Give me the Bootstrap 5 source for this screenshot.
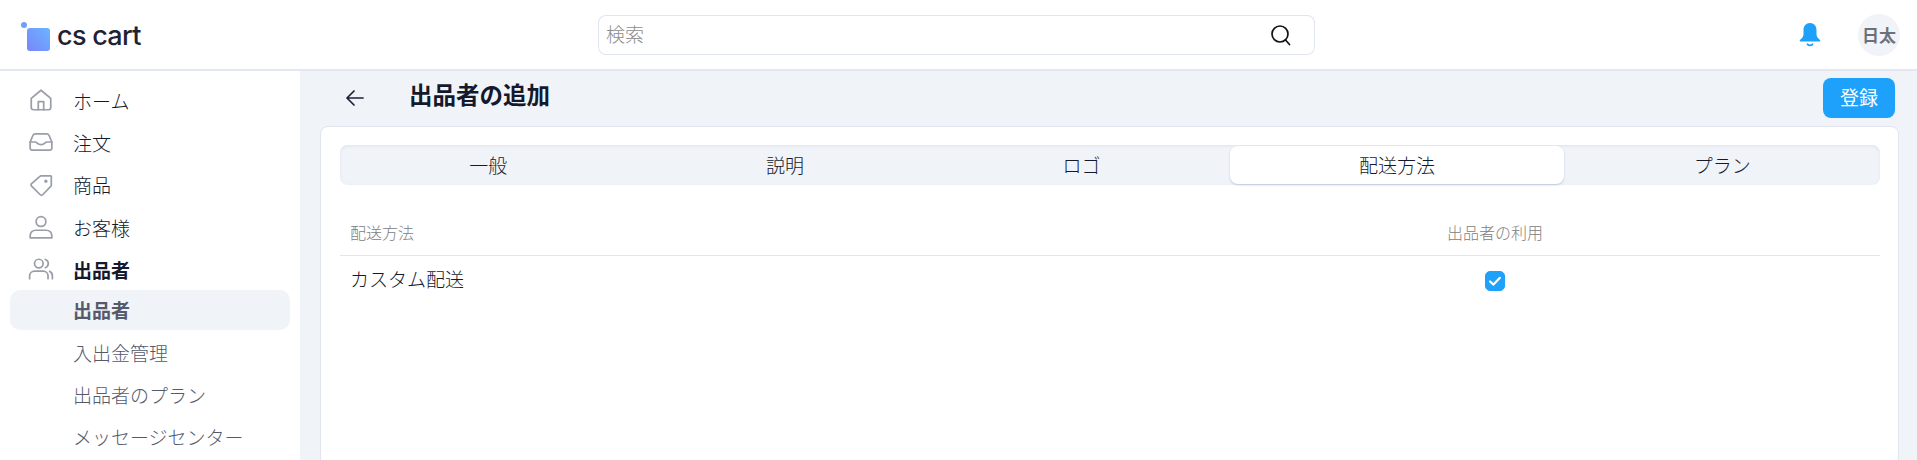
<!DOCTYPE html>
<html lang="ja">
<head>
    <meta charset="UTF-8">
    <meta name="viewport" content="width=device-width, initial-scale=1.0">
    <title>出品者の追加</title>
    <link href="https://cdn.jsdelivr.net/npm/bootstrap@5.3.3/dist/css/bootstrap.min.css" rel="stylesheet">
    <style>
        html, body {
            height: 100%;
            overflow: hidden;
        }
        body {
            font-family: "Noto Sans CJK JP", "Liberation Sans", sans-serif;
            font-size: 19px;
            font-weight: 300;
            color: #14192b;
            background: #f0f3f8;
        }
        .top-bar {
            height: 71px;
            flex: none;
            background: #fff;
            border-bottom: 2px solid #e3e7f1;
        }
        .logo-box {
            width: 598px;
            padding: 4px 0 0 21px;
        }
        .logo-name {
            font-family: Inter, "Liberation Sans", sans-serif;
            font-size: 27px;
            font-weight: 500;
            letter-spacing: -0.7px;
            color: #1d2234;
            margin-left: 6px;
        }
        .search-box {
            width: 717px;
            height: 40px;
        }
        .search-box .form-control {
            border: 1px solid #e0e5f0;
            border-right: 0;
            border-radius: 8px 0 0 8px;
            padding: 0 7px;
            font-size: 19px;
            font-weight: 300;
            box-shadow: none;
        }
        .search-box .form-control::placeholder {
            color: #8c8c8c;
        }
        .search-box .input-group-text {
            background: #fff;
            border: 1px solid #e0e5f0;
            border-left: 0;
            border-radius: 0 8px 8px 0;
            padding: 0 22px 0 0;
        }
        .user-chip {
            width: 42px;
            height: 42px;
            background: #f0f3f8;
            color: #6c7078;
            font-size: 17px;
            font-weight: 700;
            margin: 0 17px 0 36px;
        }
        .page-body {
            flex: 1 1 0;
            min-height: 0;
            overflow: hidden;
        }
        .side-col {
            width: 300px;
            flex: none;
            background: #fff;
            padding: 10px 10px 0;
        }
        .side-link {
            height: 40px;
            margin-bottom: 2.3px;
            padding-left: 63px;
            position: relative;
            color: #14192b;
            text-decoration: none;
            border-radius: 10px;
        }
        .side-link svg {
            position: absolute;
            left: 18px;
            top: 6px;
            width: 26px;
            height: 26px;
            fill: none;
            stroke: #9a9ea9;
            stroke-width: 1.6;
            stroke-linecap: round;
            stroke-linejoin: round;
        }
        .side-sub {
            margin-top: -2px;
        }
        .side-sub .side-link {
            color: #555a6b;
        }
        .side-sub .side-link.is-on {
            background: #f0f3f8;
            color: #555a6b;
            font-weight: 700;
        }
        .main-col {
            padding: 0 18px 0 20px;
        }
        .title-row {
            height: 55px;
            padding-bottom: 2px;
        }
        .back-link {
            width: 89px;
            padding-left: 25px;
        }
        .page-title {
            font-size: 23.5px;
            font-weight: 700;
            margin: 0 0 6px;
            line-height: 1;
        }
        .save-btn {
            width: 72px;
            height: 40px;
            background: #1ea1fa;
            border: 0;
            border-radius: 8px;
            font-size: 19px;
            font-weight: 400;
            padding: 0;
            margin-right: 4px;
        }
        .sheet {
            height: 340px;
            background: #fff;
            border: 1px solid #e0e5f0;
            border-radius: 8px;
            padding: 18px 18px 18px 19px;
        }
        .tab-strip {
            height: 40px;
            background: #f0f3f8;
            border-radius: 8px;
            box-shadow: inset 0 1px 3px #dfe3ea;
            padding: 1px 0;
        }
        .tab-item {
            flex: 1 1 auto;
            border-radius: 8px;
            color: #14192b;
            text-decoration: none;
        }
        .tab-item.is-on {
            background: #fff;
            box-shadow: 0 1px 2px #b9c6e0;
        }
        .ship-table {
            margin-top: 27px;
            table-layout: fixed;
        }
        .ship-table th {
            font-size: 16px;
            font-weight: 300;
            color: #808080;
            padding: 8px 10px 11px;
            border-bottom: 1px solid #e0e5f0;
        }
        .ship-table td {
            padding: 9px 10px 7px;
            border: 0;
            font-weight: 300;
            color: #14192b;
        }
        .ship-table .form-check-input {
            width: 20px;
            height: 20px;
            margin: 0 0 2px;
            border-radius: 5px;
            background-color: #1ea1fa;
            border-color: #1ea1fa;
            vertical-align: middle;
        }
        .ship-table .form-check-input:checked[type=checkbox] {
            --bs-form-check-bg-image: url("data:image/svg+xml,%3csvg xmlns='http://www.w3.org/2000/svg' viewBox='0 0 20 20'%3e%3cpath fill='none' stroke='%23fff' stroke-linecap='round' stroke-linejoin='round' stroke-width='2.4' d='m4.500 10.500 3.800 3.500 7.200-7.500'/%3e%3c/svg%3e");
        }
    </style>
</head>
<body class="d-flex flex-column">
    <header class="top-bar d-flex align-items-center">
        <div class="logo-box d-flex align-items-center">
            <svg width="30" height="30" viewBox="0 0 30 30">
                <defs>
                    <linearGradient id="logoFill" x1="0" y1="1" x2="1" y2="0">
                        <stop offset="0" stop-color="#7a85fb"/>
                        <stop offset="1" stop-color="#69b6fd"/>
                    </linearGradient>
                </defs>
                <circle cx="3" cy="3" r="3" fill="#6fa0fb"/>
                <rect x="6" y="6" width="23" height="23" rx="3" fill="url(#logoFill)"/>
            </svg>
            <span class="logo-name">cs cart</span>
        </div>
        <div class="search-box input-group">
            <input class="form-control" type="text" placeholder="検索" aria-label="検索">
            <span class="input-group-text">
                <svg width="22" height="22" viewBox="0 0 22 22" fill="none" stroke="#111" stroke-width="1.700" stroke-linecap="round">
                    <circle cx="10" cy="10" r="8"/>
                    <path d="M15.500 16 19.500 20.500"/>
                </svg>
            </span>
        </div>
        <div class="ms-auto d-flex align-items-center">
            <svg width="24" height="26" viewBox="0 0 24 26">
                <path fill="#1ea1fa" d="M12 1c-4 0-6.500 3-6.500 7v4c0 2.500-1.200 4-3.500 6-.6.6-.3 1.500.5 1.500h19c.8 0 1.100-.9.500-1.500-2.300-2-3.500-3.500-3.500-6V8c0-4-2.500-7-6.500-7Z"/>
                <path fill="none" stroke="#1ea1fa" stroke-width="1.800" stroke-linecap="round" d="M9.500 22.200c1 1.500 4 1.500 5 0"/>
            </svg>
            <div class="user-chip rounded-circle d-flex align-items-center justify-content-center">日太</div>
        </div>
    </header>

    <div class="page-body d-flex">
        <nav class="side-col">
            <a class="side-link d-flex align-items-center" href="#">
                <svg viewBox="0 0 24 24"><path d="M3 10.500 12 3l9 7.500V19a2 2 0 0 1-2 2H5a2 2 0 0 1-2-2Z"/><path d="M9.500 21v-7.500h5V21"/></svg>
                ホーム
            </a>
            <a class="side-link d-flex align-items-center" href="#">
                <svg viewBox="0 0 24 24"><path d="m2 12 2.500-6A2.500 2.500 0 0 1 6.800 4.500h10.400A2.500 2.500 0 0 1 19.500 6L22 12v5.500a2 2 0 0 1-2 2H4a2 2 0 0 1-2-2Z"/><path d="M2 12h5c1.200 0 1.500 2.500 5 2.500s3.800-2.500 5-2.500h5"/></svg>
                注文
            </a>
            <a class="side-link d-flex align-items-center" href="#">
                <svg viewBox="0 0 24 24"><path d="M21.500 4v8.200a1.500 1.500 0 0 1-.5 1L13.500 21a1.500 1.500 0 0 1-2.200 0l-8-8a1.500 1.500 0 0 1 0-2.200L11 4a1.500 1.500 0 0 1 1-.5h9Z"/><circle cx="16.500" cy="8.500" r=".8"/></svg>
                商品
            </a>
            <a class="side-link d-flex align-items-center" href="#">
                <svg viewBox="0 0 24 24"><circle cx="12" cy="7" r="4.500"/><path d="M2 22v-2c0-3 2.500-5 5-5h10c2.500 0 5 2 5 5v2Z"/></svg>
                お客様
            </a>
            <a class="side-link d-flex align-items-center fw-bold" href="#">
                <svg viewBox="0 0 24 24"><circle cx="10" cy="7" r="4"/><path d="M1.500 21v-2.500c0-2.500 2-4.500 4.500-4.500h8c2.500 0 4.500 2 4.500 4.500V21"/><path d="M16 3.200a4 4 0 0 1 0 7.600M20 14.200c1.500.7 2.500 2.300 2.500 4.300V21"/></svg>
                出品者
            </a>
            <div class="side-sub">
                <a class="side-link is-on d-flex align-items-center" href="#">出品者</a>
                <a class="side-link d-flex align-items-center" href="#">入出金管理</a>
                <a class="side-link d-flex align-items-center" href="#">出品者のプラン</a>
                <a class="side-link d-flex align-items-center" href="#">メッセージセンター</a>
            </div>
        </nav>

        <main class="main-col flex-grow-1">
            <div class="title-row d-flex align-items-center">
                <a class="back-link d-flex" href="#" aria-label="戻る">
                    <svg width="20" height="18" viewBox="0 0 20 18" fill="none" stroke="#1d2234" stroke-width="1.700" stroke-linecap="round" stroke-linejoin="round">
                        <path d="M18 9H2M9 2 2 9l7 7"/>
                    </svg>
                </a>
                <h1 class="page-title">出品者の追加</h1>
                <button class="btn btn-primary save-btn ms-auto" type="button">登録</button>
            </div>
            <div class="sheet">
                <div class="tab-strip d-flex">
                    <a class="tab-item d-flex align-items-center justify-content-center" href="#">一般</a>
                    <a class="tab-item d-flex align-items-center justify-content-center" href="#">説明</a>
                    <a class="tab-item d-flex align-items-center justify-content-center" href="#">ロゴ</a>
                    <a class="tab-item is-on d-flex align-items-center justify-content-center" href="#">配送方法</a>
                    <a class="tab-item d-flex align-items-center justify-content-center" href="#">プラン</a>
                </div>
                <table class="table ship-table">
                    <thead>
                        <tr>
                            <th>配送方法</th>
                            <th class="text-center">出品者の利用</th>
                        </tr>
                    </thead>
                    <tbody>
                        <tr>
                            <td>カスタム配送</td>
                            <td class="text-center"><input class="form-check-input" type="checkbox" checked aria-label="出品者の利用"></td>
                        </tr>
                    </tbody>
                </table>
            </div>
        </main>
    </div>

    <script src="https://cdn.jsdelivr.net/npm/bootstrap@5.3.3/dist/js/bootstrap.bundle.min.js"></script>
</body>
</html>
